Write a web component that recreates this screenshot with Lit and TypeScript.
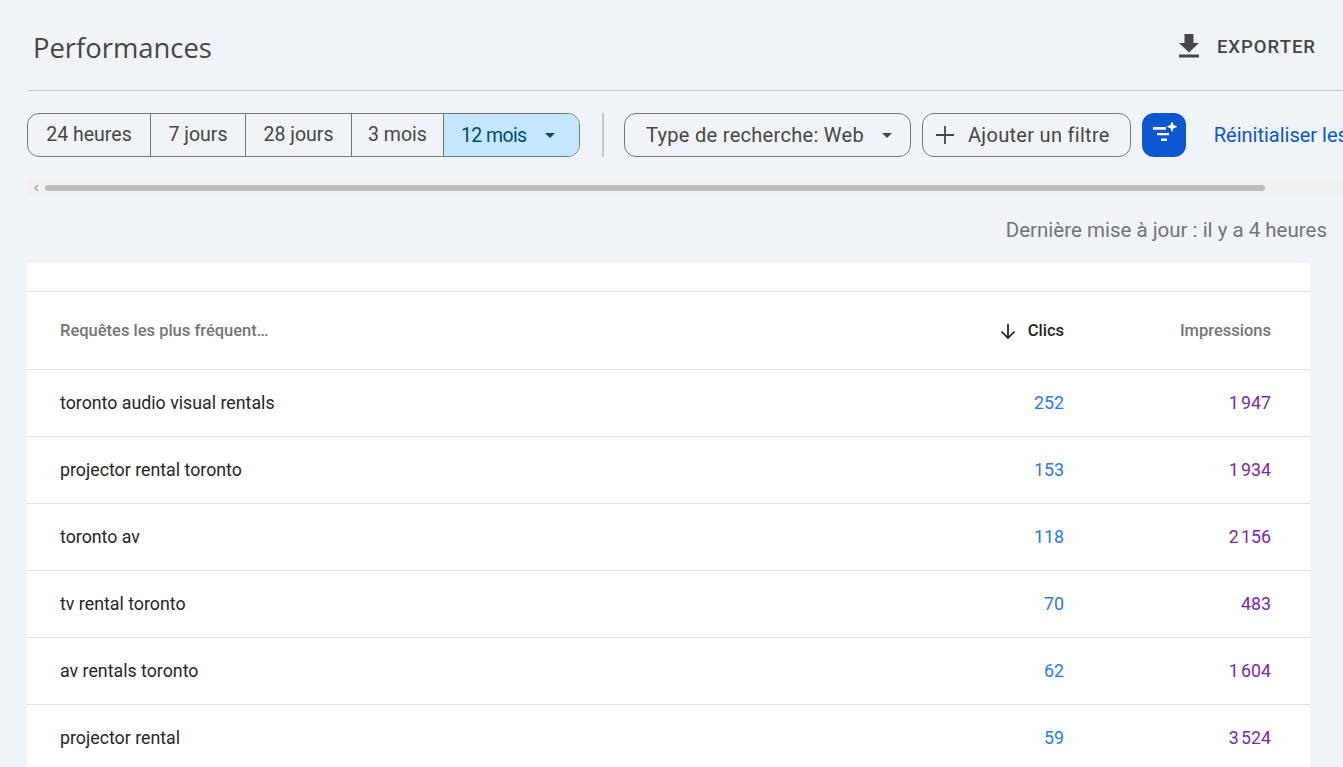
import { LitElement, html, css } from 'lit';
import { customElement } from 'lit/decorators.js';

const ROWS = [
  ['toronto audio visual rentals', '252', '1\u202f947'],
  ['projector rental toronto', '153', '1\u202f934'],
  ['toronto av', '118', '2\u202f156'],
  ['tv rental toronto', '70', '483'],
  ['av rentals toronto', '62', '1\u202f604'],
  ['projector rental', '59', '3\u202f524'],
];

@customElement('app-root')
export class AppRoot extends LitElement {
  static styles = css`
    :host {
      display: block;
      height: 767px;
      overflow: hidden;
      background: #f0f4f9;
      font-family: Roboto, 'Liberation Sans', sans-serif;
      color: #1f1f1f;
    }

    .head {
      display: flex;
      justify-content: space-between;
      align-items: center;
      height: 90px;
      margin-left: 27px;
      padding: 0 27px 0 6px;
      border-bottom: 1px solid #c7c7c7;
    }

    h1 {
      margin: 4px 0 0;
      font-size: 27.4px;
      font-weight: 400;
      color: #444746;
      font-family: 'Open Sans', Roboto, sans-serif;
    }

    .export {
      display: flex;
      align-items: center;
      gap: 18px;
      font-size: 18.5px;
      font-weight: 500;
      letter-spacing: 1px;
      color: #444746;
    }
    .export svg { display: block; margin-top: 2px; }
    .export span { margin-top: 4px; }

    .filters {
      display: flex;
      align-items: center;
      margin: 22px 0 0 27px;
      height: 44px;
      white-space: nowrap;
      font-size: 20px;
      color: #444746;
    }

    .segs {
      display: grid;
      grid-template-columns: 122px 95px 106px 92px 136px;
      flex: none;
      height: 44px;
      box-sizing: border-box;
      border: 1px solid #747775;
      border-radius: 12px;
      overflow: hidden;
      font-size: 19.5px;
    }
    .seg {
      display: flex;
      align-items: center;
      justify-content: center;
      padding-bottom: 2px;
      border-left: 1px solid #747775;
    }
    .seg:first-child { border-left: none; }
    .seg.on {
      justify-content: flex-start;
      gap: 18px;
      padding: 0 0 0 17px;
      background: #c2e7ff;
      color: #004a77;
      letter-spacing: -0.6px;
    }

    .sep { flex: none; width: 2px; height: 44px; margin: 0 20px 0 22px; background: #c7c7c7; }

    .chip {
      display: flex;
      flex: none;
      align-items: center;
      height: 44px;
      box-sizing: border-box;
      border: 1px solid #747775;
      border-radius: 12px;
      margin-right: 11px;
      letter-spacing: 0.3px;
    }
    .chip.type { gap: 18px; padding: 0 18px 0 21px; }
    .chip.add { gap: 13px; padding: 0 20px 0 12px; }

    .spark {
      display: flex;
      flex: none;
      align-items: center;
      justify-content: center;
      width: 44px;
      height: 44px;
      border-radius: 12px;
      background: #0b57d0;
    }

    .reset { flex: none; margin-left: 28px; color: #0b57d0; }

    .scroll {
      display: flex;
      align-items: center;
      height: 17px;
      margin: 22px 0 0 27px;
      background: #f1f1f1;
    }
    .scroll .arrow { width: 18px; flex: none; display: flex; justify-content: center; }
    .scroll .thumb { width: 1220px; height: 6px; border-radius: 3px; background: #bdbdbd; }

    .updated {
      margin: 22px 16px 0 0;
      height: 25px;
      line-height: 25px;
      text-align: right;
      font-size: 20.5px;
      color: #70757a;
    }

    .card {
      margin: 20px 33px 0 27px;
      padding-top: 28px;
      background: #fff;
    }

    .row {
      display: grid;
      grid-template-columns: 1fr 130px 207px;
      align-items: center;
      height: 66px;
      padding: 0 39px 0 33px;
      border-top: 1px solid #e0e0e0;
      font-size: 17.8px;
      color: #262626;
    }
    .row > div { padding-bottom: 2px; }
    .row.title {
      height: 77px;
      font-size: 16.5px;
      font-weight: 500;
      color: #757575;
    }
    .row.title > div { padding-bottom: 0; }
    .num { text-align: right; }
    .row .clicks { color: #2a7ae2; }
    .row .imp { color: #7f27a8; }
    .row.title .sorted {
      display: flex;
      justify-content: flex-end;
      align-items: center;
      gap: 11px;
      color: #1f1f1f;
    }
    .sorted svg { display: block; }
  `;

  caret(color: string) {
    return html`<svg width="10" height="5" viewBox="0 0 10 5"><path d="M0 0h10L5 5z" fill=${color}></path></svg>`;
  }

  render() {
    return html`
      <div class="head">
        <h1>Performances</h1>
        <div class="export">
          <svg width="20" height="24" viewBox="0 0 20 24">
            <path d="M5.500 0h9v9H20L10 18.500 0 9h5.500zM0 20.500h20V23.500H0z" fill="#444746"></path>
          </svg>
          <span>EXPORTER</span>
        </div>
      </div>

      <div class="filters">
        <div class="segs">
          <div class="seg">24 heures</div>
          <div class="seg">7 jours</div>
          <div class="seg">28 jours</div>
          <div class="seg">3 mois</div>
          <div class="seg on">12 mois ${this.caret('#004a77')}</div>
        </div>
        <div class="sep"></div>
        <div class="chip type">Type de recherche: Web ${this.caret('#444746')}</div>
        <div class="chip add">
          <svg width="20" height="20" viewBox="0 0 20 20">
            <path d="M9.100 1h1.800v8.100H19v1.800h-8.100V19H9.100v-8.100H1V9.100h8.100z" fill="#444746"></path>
          </svg>
          Ajouter un filtre
        </div>
        <div class="spark">
          <svg width="26" height="26" viewBox="0 0 26 26">
            <path d="M2 5h13v2.700H2zM6 11h12v2.200H6zM10 16.500h6V19h-6z" fill="#fff"></path>
            <path d="M21 -1l1.600 4.100L26.500 4.700l-3.900 1.600L21 10.200l-1.600-3.900-3.900-1.600 3.900-1.600z" fill="#fff"></path>
          </svg>
        </div>
        <div class="reset">Réinitialiser les filtres</div>
      </div>

      <div class="scroll">
        <div class="arrow">
          <svg width="6" height="8" viewBox="0 0 6 8"><path d="M5 1L2 4l3 3" fill="none" stroke="#a8a8a8" stroke-width="1.500"></path></svg>
        </div>
        <div class="thumb"></div>
      </div>

      <div class="updated">Dernière mise à jour : il y a 4 heures</div>

      <div class="card">
        <div class="row title">
          <div>Requêtes les plus fréquent…</div>
          <div class="sorted">
            <svg width="18" height="18" viewBox="0 0 18 18">
              <path d="M9 2v14M2.500 9.500L9 16l6.500-6.500" fill="none" stroke="#1f1f1f" stroke-width="1.700"></path>
            </svg>
            Clics
          </div>
          <div class="num">Impressions</div>
        </div>
        ${ROWS.map(([q, c, i]) => html`
          <div class="row">
            <div>${q}</div>
            <div class="num clicks">${c}</div>
            <div class="num imp">${i}</div>
          </div>
        `)}
      </div>
    `;
  }
}
